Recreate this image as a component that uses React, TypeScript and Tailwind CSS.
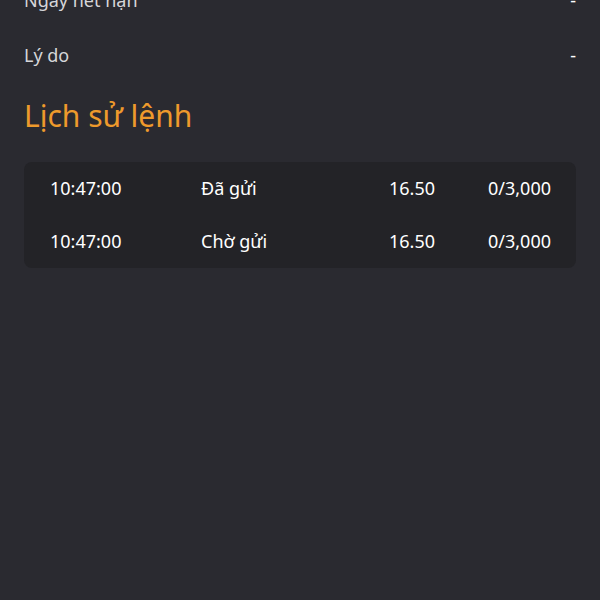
import React from "react";

type Order = {
  time: string;
  status: string;
  price: string;
  qty: string;
};

const info = [
  { label: "Ngày hết hạn", value: "-" },
  { label: "Lý do", value: "-" },
];

const orders: Order[] = [
  { time: "10:47:00", status: "Đã gửi", price: "16.50", qty: "0/3,000" },
  { time: "10:47:00", status: "Chờ gửi", price: "16.50", qty: "0/3,000" },
];

export default function App() {
  return (
    <div
      className="h-[600px] w-[600px] overflow-hidden bg-[#2a2a30] text-[#e8e8ea]"
      style={{ fontFamily: '"Noto Sans", "Open Sans", sans-serif' }}
    >
      <div className="-mt-[27px] px-6">
        {info.map((row) => (
          <div
            key={row.label}
            className="flex h-[55px] items-center justify-between text-[18px] text-[#d6d6d9]"
          >
            <span>{row.label}</span>
            <span className="text-white">{row.value}</span>
          </div>
        ))}
        <h2 className="mt-[15px] text-[30px] leading-[36px] text-[#ee9a2c]">
          Lịch sử lệnh
        </h2>
        <div className="mt-[28px] rounded-lg bg-[#232327]">
          {orders.map((order, i) => (
            <div
              key={i}
              className="flex h-[53px] items-center text-[18px] text-white"
            >
              <span className="ml-[26px] w-[151px]">{order.time}</span>
              <span className="flex-1">{order.status}</span>
              <span className="w-[80px] text-right">{order.price}</span>
              <span className="mr-[25px] w-[116px] text-right">{order.qty}</span>
            </div>
          ))}
        </div>
      </div>
    </div>
  );
}
